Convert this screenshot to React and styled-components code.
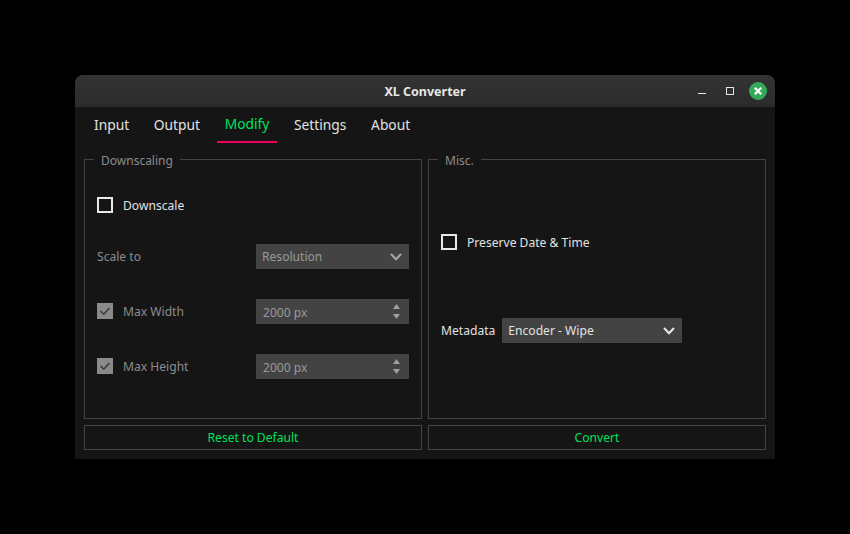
import styled, { createGlobalStyle } from "styled-components";

const GlobalStyle = createGlobalStyle`
  html, body {
    margin: 0;
    padding: 0;
    background: #000;
    font-family: "Noto Sans", "Open Sans", sans-serif;
  }
`;

const Page = styled.div`
  width: 850px;
  height: 534px;
  padding: 75px;
  box-sizing: border-box;
`;

const Window = styled.div`
  width: 700px;
  height: 384px;
  background: #151515;
  border-radius: 8px 8px 0 0;
  overflow: hidden;
  display: flex;
  flex-direction: column;
`;

const TitleBar = styled.div`
  height: 32px;
  flex: none;
  display: grid;
  grid-template-columns: 1fr auto 1fr;
  align-items: center;
  background: linear-gradient(#333333, #2b2b2b);
`;

const Title = styled.div`
  grid-column: 2;
  color: #e6e6e6;
  font-size: 12.5px;
  font-weight: 700;
`;

const Controls = styled.div`
  grid-column: 3;
  justify-self: end;
  display: flex;
  align-items: center;
  height: 18px;
  margin-right: 8px;
`;

const MinimizeIcon = styled.span`
  width: 8px;
  height: 1px;
  margin: 5px 20px 0 0;
  background: #e6e6e6;
`;

const MaximizeIcon = styled.span`
  width: 8px;
  height: 8px;
  box-sizing: border-box;
  border: 1px solid #e6e6e6;
  margin-right: 15px;
`;

const TabBar = styled.div`
  height: 36px;
  flex: none;
  display: flex;
  gap: 8.6px;
  padding-left: 11px;
`;

const Tab = styled.div`
  height: 36px;
  box-sizing: border-box;
  padding: ${(props) => (props.$active ? "7px" : "8px")} 8px 0;
  font-size: 13.8px;
  line-height: 20px;
  color: ${(props) => (props.$active ? "#00e05c" : "#e2e2e2")};
  border-bottom: 2px solid ${(props) => (props.$active ? "#f0005a" : "transparent")};
`;

const Content = styled.div`
  flex: none;
  display: grid;
  grid-template-columns: 338px 338px;
  column-gap: 6px;
  padding: 6px 9px 0;
`;

const Group = styled.fieldset`
  margin: 0;
  padding: 0 12px;
  height: 270px;
  box-sizing: border-box;
  border: 1px solid #444444;
  min-width: 0;
`;

const GroupTitle = styled.legend`
  margin-left: -3px;
  padding: 4px 7px 0;
  font-size: 12px;
  line-height: 16px;
  color: #8c8c8c;
`;

const Row = styled.div`
  display: flex;
  align-items: center;
  height: 25px;
  margin-top: ${(props) => props.$top || 0}px;
`;

const SpacedRow = styled(Row)`
  justify-content: space-between;
`;

const Box = styled.span`
  width: 16px;
  height: 16px;
  flex: none;
  box-sizing: border-box;
  margin: 0 10px 1px 0;
  border: 2px solid #e8e8e8;
  ${(props) => props.$checked && "background: #8a8a8a; border: none; display: flex;"}
`;

const Label = styled.span`
  font-size: 12.1px;
  color: ${(props) => (props.$disabled ? "#8c8c8c" : "#e2e2e2")};
`;

const Field = styled.div`
  width: ${(props) => props.$width}px;
  height: 25px;
  flex: none;
  box-sizing: border-box;
  display: flex;
  align-items: center;
  justify-content: space-between;
  padding: 0 7px 0 6px;
  background: #434343;
  font-size: 12.1px;
  color: ${(props) => (props.$disabled ? "#999999" : "#e2e2e2")};
`;

const SpinText = styled.span`
  padding-left: 1px;
  padding-top: 1px;
`;

const SpinArrows = styled.span`
  display: flex;
  flex-direction: column;
  gap: 5px;
  margin-right: 2px;
`;

const MetaLabel = styled(Label)`
  margin-right: 7px;
`;

const Footer = styled.div`
  flex: none;
  display: grid;
  grid-template-columns: 338px 338px;
  column-gap: 6px;
  padding: 6px 9px 0;
`;

const FooterButton = styled.div`
  height: 25px;
  box-sizing: border-box;
  display: flex;
  align-items: center;
  justify-content: center;
  border: 1px solid #444444;
  font-size: 12.1px;
  color: #00e05c;
`;

const CloseIcon = () => (
  <svg width="18" height="18" viewBox="0 0 18 18">
    <circle cx="9" cy="9" r="9" fill="#35a85a" />
    <path d="M5.8 5.8L12.2 12.2M12.2 5.8L5.8 12.2" stroke="#fff" strokeWidth="2.2" />
  </svg>
);

const Chevron = ({ color }) => (
  <svg width="12" height="8" viewBox="0 0 12 8">
    <path d="M1 1L6 6.2L11 1" fill="none" stroke={color} strokeWidth="2" />
  </svg>
);

const Check = () => (
  <svg width="16" height="16" viewBox="0 0 16 16">
    <path d="M3.5 8L6.8 11.2L12.5 5" fill="none" stroke="#3a3a3a" strokeWidth="1.6" />
  </svg>
);

const Arrows = () => (
  <SpinArrows>
    <svg width="7" height="5" viewBox="0 0 7 5">
      <path d="M3.5 0L7 5H0Z" fill="#a0a0a0" />
    </svg>
    <svg width="7" height="5" viewBox="0 0 7 5">
      <path d="M0 0H7L3.5 5Z" fill="#a0a0a0" />
    </svg>
  </SpinArrows>
);

const tabs = ["Input", "Output", "Modify", "Settings", "About"];

export default function App() {
  return (
    <Page>
      <GlobalStyle />
      <Window>
        <TitleBar>
          <Title>XL Converter</Title>
          <Controls>
            <MinimizeIcon />
            <MaximizeIcon />
            <CloseIcon />
          </Controls>
        </TitleBar>
        <TabBar>
          {tabs.map((name) => (
            <Tab key={name} $active={name === "Modify"}>
              {name}
            </Tab>
          ))}
        </TabBar>
        <Content>
          <Group>
            <GroupTitle>Downscaling</GroupTitle>
            <Row $top={24}>
              <Box />
              <Label>Downscale</Label>
            </Row>
            <SpacedRow $top={26}>
              <Label $disabled>Scale to</Label>
              <Field $width={153} $disabled>
                Resolution
                <Chevron color="#a8a8a8" />
              </Field>
            </SpacedRow>
            <SpacedRow $top={30}>
              <Row>
                <Box $checked>
                  <Check />
                </Box>
                <Label $disabled>Max Width</Label>
              </Row>
              <Field $width={153} $disabled>
                <SpinText>2000 px</SpinText>
                <Arrows />
              </Field>
            </SpacedRow>
            <SpacedRow $top={30}>
              <Row>
                <Box $checked>
                  <Check />
                </Box>
                <Label $disabled>Max Height</Label>
              </Row>
              <Field $width={153} $disabled>
                <SpinText>2000 px</SpinText>
                <Arrows />
              </Field>
            </SpacedRow>
          </Group>
          <Group>
            <GroupTitle>Misc.</GroupTitle>
            <Row $top={61}>
              <Box />
              <Label>Preserve Date &amp; Time</Label>
            </Row>
            <Row $top={63}>
              <MetaLabel>Metadata</MetaLabel>
              <Field $width={180}>
                Encoder - Wipe
                <Chevron color="#e8e8e8" />
              </Field>
            </Row>
          </Group>
        </Content>
        <Footer>
          <FooterButton>Reset to Default</FooterButton>
          <FooterButton>Convert</FooterButton>
        </Footer>
      </Window>
    </Page>
  );
}
